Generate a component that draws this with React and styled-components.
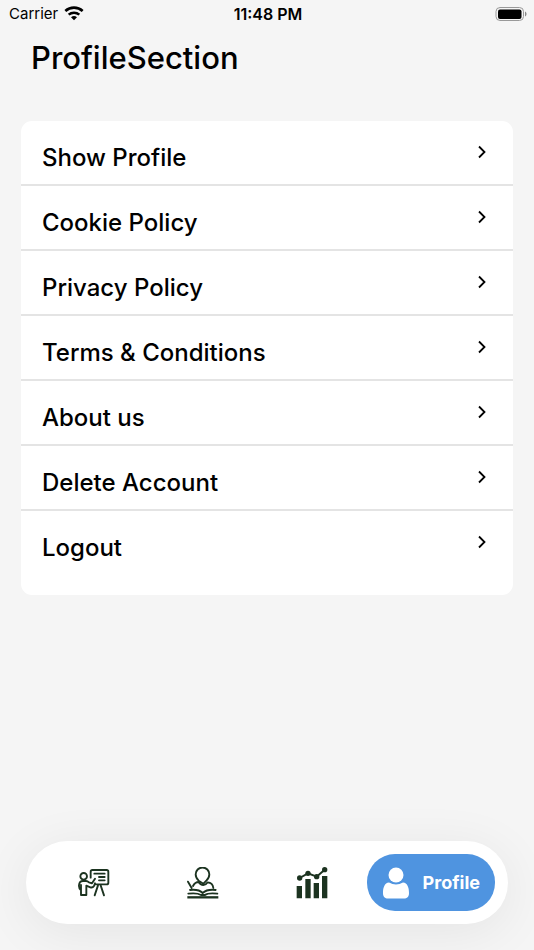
import React from "react";
import styled, { createGlobalStyle } from "styled-components";

const GlobalStyle = createGlobalStyle`
  *, *::before, *::after { box-sizing: border-box; }
  body {
    margin: 0;
    background: #f5f5f5;
    color: #000;
    font-family: Inter, "Liberation Sans", sans-serif;
  }
`;

const Screen = styled.div`
  min-height: 100vh;
  display: flex;
  flex-direction: column;
`;

const StatusBar = styled.header`
  display: grid;
  grid-template-columns: 1fr auto 1fr;
  align-items: center;
  height: 27px;
  padding: 0 7px 0 9px;
  font-size: 15px;
  line-height: 20px;
`;

const Carrier = styled.div`
  display: flex;
  align-items: center;
  gap: 6px;
`;

const Clock = styled.time`
  font-size: 16px;
  font-weight: 600;
`;

const Battery = styled.svg`
  justify-self: end;
`;

const Title = styled.h1`
  margin: 10px 31px 0;
  font-size: 31px;
  line-height: 42px;
  font-weight: 500;
`;

const Menu = styled.ul`
  list-style: none;
  margin: 42px 21px 32px;
  padding: 0 0 20px;
  border-radius: 11px;
  background: #fff;
`;

const MenuItem = styled.li`
  height: 65px;
  border-bottom: 2px solid #e4e4e4;

  &:last-child {
    height: 64px;
    border-bottom: 0;
  }
`;

const MenuButton = styled.button`
  display: flex;
  align-items: flex-start;
  justify-content: space-between;
  width: 100%;
  height: 100%;
  padding: 21px 26px 0 21px;
  border: 0;
  background: none;
  color: inherit;
  font: 500 24px/32px Inter, "Liberation Sans", sans-serif;
  text-align: left;
  cursor: pointer;
`;

const Chevron = styled.svg`
  flex: none;
  margin-top: 3px;
`;

const TabBar = styled.nav`
  display: flex;
  align-items: center;
  margin: auto 26px 26px;
  padding: 13px;
  border-radius: 42px;
  background: #fff;
  box-shadow: 0 8px 52px rgba(0, 0, 0, 0.07);
`;

const Tab = styled.button`
  display: flex;
  flex: ${(p) => (p.$active ? "none" : "1")};
  align-items: center;
  justify-content: center;
  gap: 13px;
  height: 57px;
  padding: ${(p) => (p.$active ? "0 15px" : "0")};
  border: 0;
  border-radius: 28px;
  background: ${(p) => (p.$active ? "#4f94e0" : "none")};
  color: ${(p) => (p.$active ? "#fff" : "#1c3320")};
  font: 700 18px/24px Inter, "Liberation Sans", sans-serif;
  cursor: pointer;
`;

const WifiIcon = () => (
  <svg width="20" height="15" viewBox="0 0 60 45" fill="none" stroke="#000" aria-hidden="true">
    <path d="M4 15a39 39 0 0 1 52 0" strokeWidth="8" />
    <path d="M14 26a24 24 0 0 1 32 0" strokeWidth="7.5" />
    <path d="M30 43l-9-9a13 13 0 0 1 18 0z" fill="#000" stroke="none" />
  </svg>
);

const BatteryIcon = () => (
  <Battery width="32" height="16" viewBox="0 0 32 16" role="img" aria-label="Battery full">
    <rect x="1" y="1.5" width="27.5" height="13" rx="4" fill="none" stroke="#999" />
    <rect x="3" y="3.5" width="23.5" height="9.5" rx="2" />
    <path d="M30 5.5c2 .8 2 4.2 0 5z" fill="#888" />
  </Battery>
);

const ChevronIcon = () => (
  <Chevron width="10" height="14" viewBox="0 0 10 14" fill="none" stroke="#000" strokeWidth="1.8" aria-hidden="true">
    <path d="M2 1.5 7.5 7 2 12.5" />
  </Chevron>
);

const TeachIcon = () => (
  <svg width="32" height="28" viewBox="0 0 96 84" fill="none" stroke="currentColor" strokeWidth="5.6" strokeLinecap="round" strokeLinejoin="round" aria-hidden="true">
    <path d="M38 26V8q0-5 5-5h43q5 0 5 5v33q0 5-5 5H53" />
    <path d="M49 14h31M63 24h17M63 34h17" />
    <circle cx="17" cy="22" r="10" />
    <path d="M9 78V64Q2 58 3 49Q4 36 15 36h9q5 0 9 4l9 3 9-14M25 50l12 5q7 2 11-4l3-8M25 50v28H9M9 48v16" />
    <path d="M60 49 50 79M68 49l10 30" />
  </svg>
);

const ReadIcon = () => (
  <svg width="32" height="32" viewBox="0 0 96 96" fill="none" stroke="currentColor" strokeWidth="5.6" strokeLinecap="round" strokeLinejoin="round" aria-hidden="true">
    <path d="M50 51 35 41Q26 33 26 22a20 20 0 0 1 41 0q0 11-9 19l-8 8" />
    <path d="M18 57q6-12 17-12 5 9 14 9 8 0 13-8 15 1 17 17M3 44l11 19" />
    <path d="M9 69q26-3 38 9 13-12 39-9" />
    <path d="M4 80q27-3 38 4h12q9-7 37-4" />
    <path d="M1 91h93" strokeLinecap="butt" strokeWidth="7" />
  </svg>
);

const StatsIcon = () => (
  <svg width="32" height="32" viewBox="0 0 96 96" fill="currentColor" aria-hidden="true">
    <path d="M2 57h16v37H2zM28 36h16v58H28zM53 48h16v46H53zM78 27h16v67H78z" />
    <circle cx="11" cy="33" r="8" />
    <circle cx="36" cy="19" r="8" />
    <circle cx="62" cy="29" r="8" />
    <circle cx="86" cy="8" r="8" />
    <path d="M11 33 36 19 62 29 86 8" fill="none" stroke="currentColor" strokeWidth="6" />
  </svg>
);

const PersonIcon = () => (
  <svg width="28" height="32" viewBox="0 0 28 32" fill="currentColor" aria-hidden="true">
    <circle cx="14" cy="8" r="7.5" />
    <path d="M7 15.500q7 4 14 0c4.500.5 6 5 6 10.500 0 4-2 5.500-5 5.500H6c-3 0-5-1.500-5-5.500 0-5.500 1.500-10 6-10.500z" />
  </svg>
);

const menuItems = [
  "Show Profile",
  "Cookie Policy",
  "Privacy Policy",
  "Terms & Conditions",
  "About us",
  "Delete Account",
  "Logout",
];

const tabs = [
  { name: "Teaching", Icon: TeachIcon },
  { name: "Reading", Icon: ReadIcon },
  { name: "Statistics", Icon: StatsIcon },
];

export default function App() {
  return (
    <Screen>
      <GlobalStyle />
      <StatusBar>
        <Carrier>
          Carrier
          <WifiIcon />
        </Carrier>
        <Clock>11:48 PM</Clock>
        <BatteryIcon />
      </StatusBar>
      <Title>ProfileSection</Title>
      <Menu>
        {menuItems.map((label) => (
          <MenuItem key={label}>
            <MenuButton type="button">
              {label}
              <ChevronIcon />
            </MenuButton>
          </MenuItem>
        ))}
      </Menu>
      <TabBar aria-label="Main">
        {tabs.map(({ name, Icon }) => (
          <Tab key={name} type="button" aria-label={name}>
            <Icon />
          </Tab>
        ))}
        <Tab type="button" $active aria-current="page">
          <PersonIcon />
          Profile
        </Tab>
      </TabBar>
    </Screen>
  );
}
